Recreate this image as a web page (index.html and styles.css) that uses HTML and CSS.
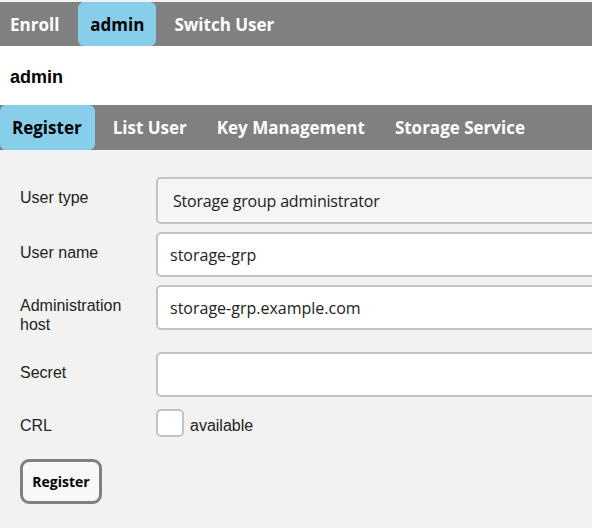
FILE: index.html
```html
<!DOCTYPE html>
<html>
<head>
<meta charset="utf-8">
<link rel="stylesheet" href="styles.css">
</head>
<body>
<nav class="bar top-bar">
  <a class="tab">Enroll</a>
  <a class="tab active">admin</a>
  <a class="tab">Switch User</a>
</nav>
<header class="title"><h1>admin</h1></header>
<nav class="bar sub-bar">
  <a class="tab active">Register</a>
  <a class="tab">List User</a>
  <a class="tab">Key Management</a>
  <a class="tab">Storage Service</a>
</nav>
<main class="content">
  <form class="form">
    <label class="lbl">User type</label>
    <div class="field"><select class="ctl select"><option>Storage group administrator</option></select></div>
    <label class="lbl">User name</label>
    <div class="field"><input class="ctl input" type="text" value="storage-grp"></div>
    <label class="lbl">Administration<br>host</label>
    <div class="field"><input class="ctl input" type="text" value="storage-grp.example.com"></div>
    <label class="lbl">Secret</label>
    <div class="field"><input class="ctl input" type="password" value=""></div>
    <label class="lbl">CRL</label>
    <div class="field check-field"><input class="check" type="checkbox"><span class="check-text">available</span></div>
  </form>
  <button class="btn" type="button">Register</button>
</main>
</body>
</html>
```
FILE: styles.css
```css
html, body {
  margin: 0;
  padding: 0;
  overflow: hidden;
}
body {
  width: 592px;
  height: 528px;
  background: #f2f2f2;
  font-family: "Liberation Sans", Arial, sans-serif;
  color: #222;
}
.bar {
  display: flex;
  background: #808080;
  height: 44px;
  align-items: stretch;
}
.top-bar {
  margin-top: 2px;
}
.tab {
  display: flex;
  align-items: center;
  padding: 0 12px;
  margin-right: 6px;
  font-family: "Open Sans", sans-serif;
  font-weight: 700;
  font-size: 17px;
  color: #fff;
  border-radius: 6px;
  white-space: nowrap;
}
.top-bar .tab:first-child {
  padding-left: 10px;
  padding-right: 13px;
}
.tab.active {
  background: #87ceeb;
  color: #000;
}
.title {
  background: #fff;
  height: 59px;
  display: flex;
  align-items: center;
}
.title h1 {
  margin: 0 0 0 10px;
  font-size: 18px;
  font-weight: 700;
  color: #000;
  position: relative;
  top: 2px;
}
.sub-bar {
  height: 45px;
}
.sub-bar .tab:first-child {
  padding-right: 13px;
}
.content {
  padding: 27px 0 0 20px;
}
.form {
  display: grid;
  grid-template-columns: 136px 1fr;
  row-gap: 8px;
  overflow: hidden;
}
.lbl {
  font-size: 16px;
  line-height: 19px;
  padding: 11px 0 10px;
  color: #222;
}
.field {
  display: flex;
  align-items: flex-start;
}
.ctl {
  box-sizing: border-box;
  width: 520px;
  height: 45px;
  border: 2px solid #c3c3c3;
  border-radius: 5px;
  background: #fff;
  font-family: "Open Sans", sans-serif;
  font-size: 16px;
  color: #222;
  padding: 0 12px;
  margin: 0;
  outline: none;
}
.select {
  -webkit-appearance: none;
  appearance: none;
  height: 47px;
  background: #f5f5f5;
  padding-left: 15px;
  letter-spacing: -0.2px;
}
.check-field {
  align-items: flex-start;
}
.check {
  -webkit-appearance: none;
  appearance: none;
  box-sizing: border-box;
  width: 28px;
  height: 28px;
  margin: 4px 6px 0 0;
  border: 2px solid #c3c3c3;
  border-radius: 5px;
  background: #fff;
}
.check-text {
  font-size: 16px;
  line-height: 19px;
  margin-top: 11px;
  color: #222;
}
.btn {
  margin-top: 14px;
  box-sizing: border-box;
  width: 82px;
  height: 45px;
  border: 3px solid #808080;
  border-radius: 9px;
  background: #f8f8f8;
  font-family: "Open Sans", sans-serif;
  font-weight: 700;
  font-size: 14px;
  color: #000;
  padding: 0;
}
```
